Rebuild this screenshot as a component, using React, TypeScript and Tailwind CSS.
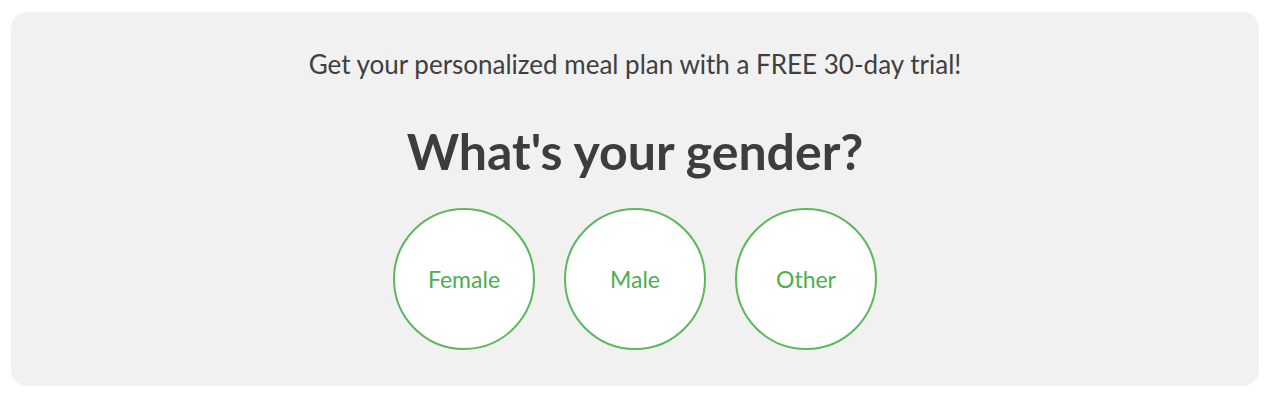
export default function App() {
  const opts = ["Female", "Male", "Other"];
  return (
    <div className="w-[1280px] h-[405px] bg-white pt-[12px] pl-[11px] font-['Lato',sans-serif]">
      <div className="w-[1248px] h-[374px] rounded-[16px] bg-[#f1f1f1] flex flex-col items-center">
        <p className="mt-[34px] text-[26px] leading-[36px] text-[#3f3f3f]">
          Get your personalized meal plan with a FREE 30-day trial!
        </p>
        <h1 className="mt-[41px] text-[50px] leading-[56px] font-bold text-[#3d3d3d]">
          What's your gender?
        </h1>
        <div className="mt-[29px] flex gap-[29px]">
          {opts.map((o) => (
            <button
              key={o}
              className="w-[142px] h-[142px] rounded-full bg-white border-2 border-[#5cb85f] text-[#4cae50] text-[23px] flex items-center justify-center"
            >
              {o}
            </button>
          ))}
        </div>
      </div>
    </div>
  );
}
